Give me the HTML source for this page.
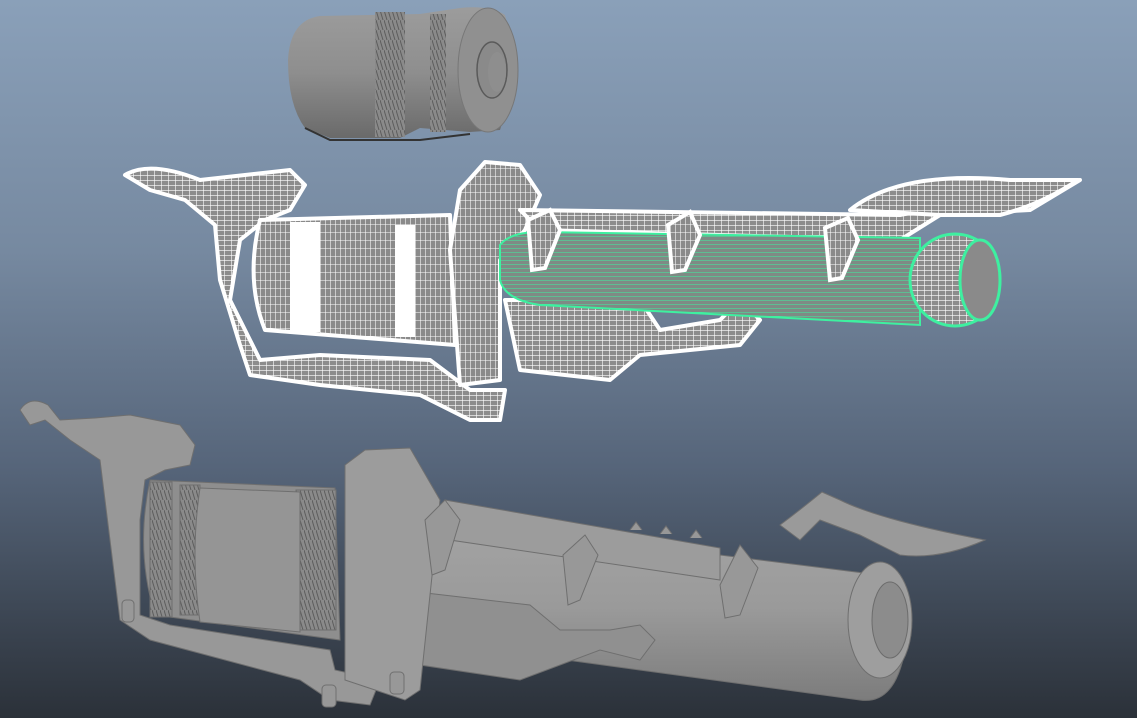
<!DOCTYPE html>
<html><head><meta charset="utf-8"><style>
html,body{margin:0;padding:0;width:1137px;height:718px;overflow:hidden;background:#6d7f93}
svg{display:block}
</style></head><body>
<svg width="1137" height="718" viewBox="0 0 1137 718" xmlns="http://www.w3.org/2000/svg">
<defs>
<linearGradient id="bg" x1="0" y1="0" x2="0" y2="1">
<stop offset="0" stop-color="#8aa0b9"/><stop offset="0.35" stop-color="#7689a0"/><stop offset="0.65" stop-color="#56657a"/><stop offset="1" stop-color="#2b3139"/></linearGradient>
<pattern id="grid" width="7" height="5" patternUnits="userSpaceOnUse"><rect width="7" height="5" fill="#8c8c8c"/><path d="M0 0H7M0 0V5" stroke="#fff" stroke-width="1.2"/></pattern>
<pattern id="vgrid" width="5" height="8" patternUnits="userSpaceOnUse"><rect width="5" height="8" fill="#8a8a8a"/><path d="M0 0H5M0 0V8" stroke="#fff" stroke-width="1.1"/></pattern>
<pattern id="green" width="30" height="4" patternUnits="userSpaceOnUse"><rect width="30" height="4" fill="#7f8a85"/><path d="M0 0H30" stroke="#3ef0a0" stroke-width="1.1"/></pattern>
<linearGradient id="cyl" x1="0" y1="0" x2="0" y2="1"><stop offset="0" stop-color="#9c9c9c"/><stop offset="0.5" stop-color="#8e8e8e"/><stop offset="1" stop-color="#6a6a6a"/></linearGradient>
<linearGradient id="barrel" x1="0" y1="0" x2="0" y2="1"><stop offset="0" stop-color="#a4a4a4"/><stop offset="0.5" stop-color="#9a9a9a"/><stop offset="1" stop-color="#7c7c7c"/></linearGradient>
<pattern id="teeth" width="4" height="10" patternUnits="userSpaceOnUse"><rect width="4" height="10" fill="#8a8a8a"/><path d="M0 0L3 10" stroke="#5d5d5d" stroke-width="1"/></pattern>
</defs>
<rect width="1137" height="718" fill="url(#bg)"/>

<!-- top cylinder -->
<g>
<path d="M320 16 Q290 20 288 60 Q288 105 305 128 L330 138 L400 138 L420 128 L470 132 L500 130 Q520 70 505 15 Q490 5 460 8 L420 14 L320 16Z" fill="url(#cyl)"/>
<rect x="375" y="12" width="30" height="125" fill="url(#teeth)"/>
<rect x="430" y="14" width="16" height="118" fill="url(#teeth)"/>
<ellipse cx="488" cy="70" rx="30" ry="62" fill="#909090" stroke="#777" stroke-width="1"/>
<ellipse cx="492" cy="70" rx="15" ry="28" fill="#8a8a8a" stroke="#5a5a5a" stroke-width="1.5"/>
<ellipse cx="497" cy="72" rx="9" ry="20" fill="#8e8e8e"/>
<path d="M305 128 L330 140 L420 140 L470 134" stroke="#333" stroke-width="2" fill="none"/>
</g>

<!-- wireframe gun -->
<g stroke="#fff" stroke-width="4" stroke-linejoin="round">
<path d="M125 175 Q150 160 200 180 L290 170 L305 185 L290 210 L265 220 L240 240 L230 300 L250 340 L260 360 L320 355 L430 360 L470 390 L505 390 L500 420 L470 420 L420 395 L320 385 L250 375 L240 345 L220 280 L215 225 L185 200 L150 190 Z" fill="url(#grid)"/>
<path d="M260 220 L450 215 L455 345 L265 330 Q245 280 260 220Z" fill="url(#vgrid)"/>
<path d="M460 190 L485 162 L520 165 L540 195 L525 230 L500 260 L500 380 L460 385 L450 250 Z" fill="url(#vgrid)"/>
<path d="M520 210 L900 215 L1080 180 L1030 210 L940 215 L900 240 L540 230 Z" fill="url(#grid)"/>
<path d="M505 300 L640 300 L660 330 L720 320 L740 300 L760 320 L740 345 L640 355 L610 380 L520 370 Z" fill="url(#grid)"/>
<path d="M850 210 Q900 170 1010 180 L1078 180 Q1040 205 1000 215 L940 215 Z" fill="url(#grid)"/>
</g>
<rect x="290" y="222" width="30" height="110" fill="#fff"/>
<rect x="395" y="225" width="20" height="112" fill="#fff"/>
<path d="M500 245 Q510 232 540 232 L920 238 L920 325 L540 305 Q505 300 500 280Z" fill="url(#green)" stroke="#3ef0a0" stroke-width="2"/>
<ellipse cx="955" cy="280" rx="45" ry="46" fill="url(#grid)" stroke="#3ef0a0" stroke-width="3"/>
<ellipse cx="980" cy="280" rx="20" ry="40" fill="#8a8a8a" stroke="#3ef0a0" stroke-width="3"/>
<g fill="url(#vgrid)" stroke="#fff" stroke-width="4">
<path d="M528 220 L550 210 L560 230 L545 268 L532 270Z"/>
<path d="M668 225 L690 212 L700 235 L685 270 L672 272Z"/>
<path d="M825 228 L848 218 L858 240 L842 278 L830 280Z"/>
</g>

<!-- bottom gun -->
<g fill="#989898" stroke="#6f6f6f" stroke-width="1">
<path d="M20 410 Q30 395 48 405 L60 420 L95 418 L130 415 L180 425 L195 445 L190 465 L165 470 L145 480 L140 520 L140 615 L170 625 L330 650 L335 670 L380 680 L370 705 L330 700 L300 680 L150 640 L120 620 L105 500 L100 460 L70 440 L45 420 L30 425Z"/>
<path d="M150 480 L335 488 L340 640 L155 615 Q135 550 150 480Z" fill="#8e8e8e"/>
<rect x="150" y="482" width="22" height="135" fill="url(#teeth)"/>
<rect x="180" y="485" width="20" height="130" fill="url(#teeth)"/>
<rect x="296" y="490" width="40" height="140" fill="url(#teeth)"/>
<path d="M200 488 L300 492 L300 632 L200 622 Q190 555 200 488Z" fill="#959595"/>
<path d="M400 515 L880 575 Q910 590 905 650 Q895 705 860 700 L420 640 Z" fill="url(#barrel)"/>
<path d="M445 500 L720 548 L720 580 L450 540Z" fill="#9c9c9c"/>
<path d="M630 530 l6 -8 l6 8 M660 534 l6 -8 l6 8 M690 538 l6 -8 l6 8"/>
<path d="M400 590 L530 605 L560 630 L610 630 L640 625 L655 640 L640 660 L600 650 L520 680 L420 665 Z" fill="#909090"/>
<path d="M780 525 Q800 510 822 492 L840 500 Q880 520 985 540 Q940 560 900 555 L860 535 L820 520 L800 540Z" fill="#9a9a9a"/>
<ellipse cx="880" cy="620" rx="32" ry="58" fill="#9e9e9e"/>
<ellipse cx="890" cy="620" rx="18" ry="38" fill="#8c8c8c" stroke="#6c6c6c"/>
<path d="M345 465 L365 450 L410 448 L440 500 L420 690 L405 700 L345 680 Z" fill="#9c9c9c"/>
<path d="M425 520 L445 500 L460 520 L445 570 L432 575Z"/>
<path d="M563 555 L585 535 L598 555 L580 600 L568 605Z"/>
<path d="M720 585 L740 545 L758 568 L740 615 L725 618Z"/>
<rect x="122" y="600" width="12" height="22" rx="4"/>
<rect x="322" y="685" width="14" height="22" rx="4"/>
<rect x="390" y="672" width="14" height="22" rx="4"/>
</g>
</svg>
</body></html>
